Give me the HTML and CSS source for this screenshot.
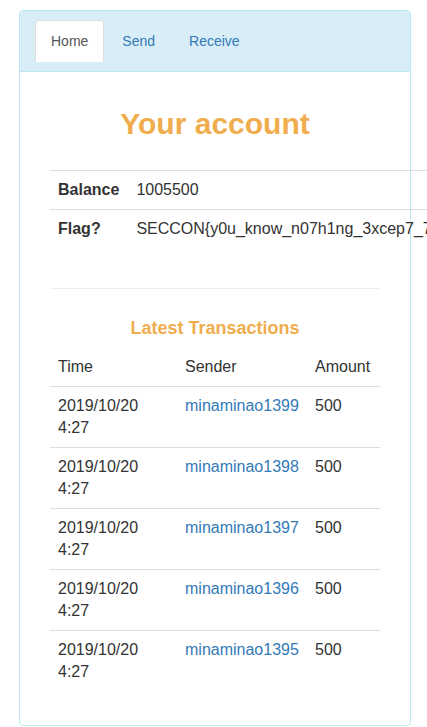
FILE: index.html
```html
<!doctype html>
<html lang="en">
<head>
  <meta charset="utf-8">
  <title>Your account</title>
  <link rel="stylesheet" href="styles.css">
</head>
<body>
<div class="panel">
  <div class="panel-heading">
    <ul class="tabs">
      <li class="active"><a href="#">Home</a></li>
      <li><a href="#">Send</a></li>
      <li><a href="#">Receive</a></li>
    </ul>
  </div>
  <div class="panel-body">
    <div class="col">
      <h2 class="title">Your account</h2>
      <table class="info">
        <tr><th>Balance</th><td>1005500</td></tr>
        <tr><th>Flag?</th><td>SECCON{y0u_know_n07h1ng_3xcep7_7h3_fl4g}</td></tr>
      </table>
      <hr>
      <h4 class="subtitle">Latest Transactions</h4>
      <table class="tx">
        <tr class="head"><td class="c-time">Time</td><td class="c-sender">Sender</td><td>Amount</td></tr>
        <tr><td>2019/10/20 4:27</td><td><a href="#">minaminao1399</a></td><td>500</td></tr>
        <tr><td>2019/10/20 4:27</td><td><a href="#">minaminao1398</a></td><td>500</td></tr>
        <tr><td>2019/10/20 4:27</td><td><a href="#">minaminao1397</a></td><td>500</td></tr>
        <tr><td>2019/10/20 4:27</td><td><a href="#">minaminao1396</a></td><td>500</td></tr>
        <tr><td>2019/10/20 4:27</td><td><a href="#">minaminao1395</a></td><td>500</td></tr>
      </table>
    </div>
  </div>
</div>
</body>
</html>
```
FILE: styles.css
```css
/* Base */
body {
  margin: 0;
  padding: 10px 0 0 19px;
  font-family: "Liberation Sans", Arial, sans-serif;
  font-size: 16px;
  line-height: 22px;
  color: #333;
  background: white;
}
a {
  color: #337ab7;
  text-decoration: none;
}

/* Panel */
.panel {
  width: 390px;
  border: 1px solid #bce8f1;
  border-radius: 4px;
  background: white;
}
.panel-heading {
  background: #d9edf7;
  border-bottom: 1px solid #bce8f1;
  border-radius: 3px 3px 0 0;
  padding: 9px 15px;
}
.panel-body {
  padding: 15px;
}
.col {
  padding: 0 15px;
}

/* Tabs */
.tabs {
  display: flex;
  gap: 2px;
  margin: 0;
  padding: 0;
  list-style: none;
  font-size: 14px;
  line-height: 20px;
}
.tabs a {
  display: block;
  padding: 10px 15px;
  border: 1px solid transparent;
  border-radius: 4px 4px 0 0;
}
.tabs .active a {
  color: #555;
  background: white;
  border-color: #ddd;
  border-bottom-color: transparent;
}

/* Headings */
.title {
  margin: 20px 0 30px;
  font-size: 30px;
  line-height: 33px;
  font-weight: bold;
  color: #f0ad4e;
  text-align: center;
}
.subtitle {
  margin: 29px 0 10px;
  font-size: 18px;
  line-height: 20px;
  font-weight: bold;
  color: #f0ad4e;
  text-align: center;
}
hr {
  margin: 20px 0;
  border: 0;
  border-top: 1px solid #eee;
}

/* Tables */
table {
  border-collapse: collapse;
  margin-bottom: 20px;
}
table th,
table td {
  padding: 8px;
  text-align: left;
  vertical-align: top;
  border-top: 1px solid #ddd;
}
.info {
  white-space: nowrap;
  margin-bottom: 40px;
}
.info th {
  font-weight: bold;
  padding-right: 9px;
}
.tx {
  width: 100%;
  margin-bottom: 19px;
}
.tx .head td {
  border-top: 0;
}
.tx .c-time {
  width: 111px;
}
.tx .c-sender {
  width: 114px;
}
```
